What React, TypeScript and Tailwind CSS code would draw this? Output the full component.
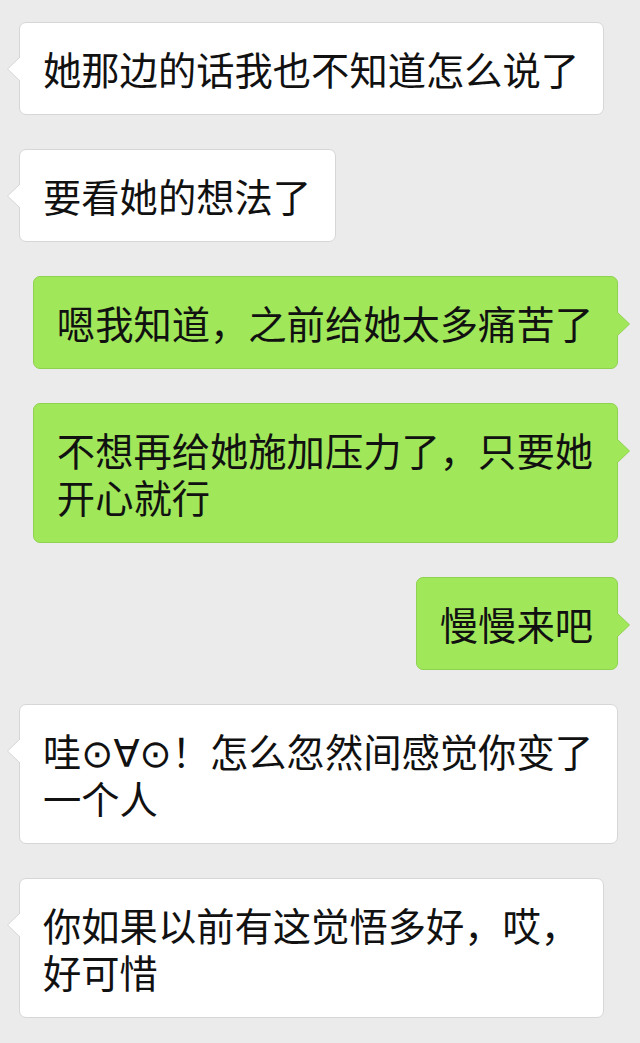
type Msg = { side: "left" | "right"; lines: React.ReactNode[] };

const messages: Msg[] = [
  { side: "left", lines: ["她那边的话我也不知道怎么说了"] },
  { side: "left", lines: ["要看她的想法了"] },
  { side: "right", lines: ["嗯我知道，之前给她太多痛苦了"] },
  { side: "right", lines: ["不想再给她施加压力了，只要她", "开心就行"] },
  { side: "right", lines: ["慢慢来吧"] },
  {
    side: "left",
    lines: [
      <>
        哇<span className="font-['DejaVu_Sans'] leading-none">⊙∀⊙</span>！怎么忽然间感觉你变了
      </>,
      "一个人",
    ],
  },
  { side: "left", lines: ["你如果以前有这觉悟多好，哎，", "好可惜"] },
];

function Tail({ side }: { side: "left" | "right" }) {
  if (side === "left") {
    return (
      <svg className="absolute -left-[14px] top-[34px]" width="14" height="24" viewBox="0 0 14 24">
        <polygon points="14,0 1.5,12 14,24" fill="#ffffff" />
        <polyline points="14,0 1.5,12 14,24" fill="none" stroke="#d6d6d6" strokeWidth="1" />
      </svg>
    );
  }
  return (
    <svg className="absolute -right-[14px] top-[35px]" width="14" height="24" viewBox="0 0 14 24">
      <polygon points="0,0 12.5,12 0,24" fill="#a0e75a" />
      <polyline points="0,0 12.5,12 0,24" fill="none" stroke="#8fd24f" strokeWidth="1" />
    </svg>
  );
}

function Bubble({ msg }: { msg: Msg }) {
  const isLeft = msg.side === "left";
  return (
    <div className={isLeft ? "flex justify-start pl-[19px]" : "flex justify-end pr-[22px]"}>
      <div
        className={
          isLeft
            ? "relative rounded-[7px] border border-[#d6d6d6] bg-white pl-[23px] pr-[24px] py-[22px]"
            : "relative rounded-[7px] border border-[#8fd24f] bg-[#a0e75a] pl-[23px] pr-[24px] py-[22px]"
        }
      >
        <Tail side={msg.side} />
        {msg.lines.map((line, i) => (
          <div key={i} className="h-[47px] whitespace-nowrap text-[38.3px] leading-[47px] text-[#111111]">
            {line}
          </div>
        ))}
      </div>
    </div>
  );
}

export default function App() {
  return (
    <div className="min-h-screen w-[640px] bg-[#ebebeb] pt-[22px] font-['Noto_Sans_CJK_SC',sans-serif]">
      <div className="flex flex-col gap-[34px]">
        {messages.map((m, i) => (
          <Bubble key={i} msg={m} />
        ))}
      </div>
    </div>
  );
}
